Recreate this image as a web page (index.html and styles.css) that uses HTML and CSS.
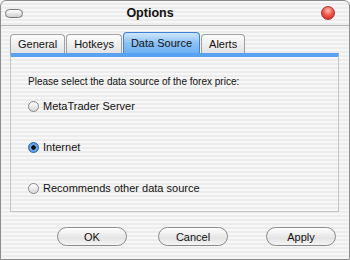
FILE: index.html
```html
<!DOCTYPE html>
<html lang="en">

<head>
    <meta charset="UTF-8">
    <title>Options</title>
    <link rel="stylesheet" href="styles.css">
</head>

<body>
    <div class="window">
        <div class="titlebar">
            <span class="pill"></span>
            <span class="title">Options</span>
            <span class="close"></span>
        </div>

        <div class="tabs">
            <div class="tab">General</div>
            <div class="tab">Hotkeys</div>
            <div class="tab active">Data Source</div>
            <div class="tab">Alerts</div>
        </div>

        <div class="panel">
            <div class="prompt">Please select the data source of the forex price:</div>
            <label class="radio"><span class="dot"></span>MetaTrader Server</label>
            <label class="radio"><span class="dot checked"></span>Internet</label>
            <label class="radio"><span class="dot"></span>Recommends other data source</label>
        </div>

        <div class="buttons">
            <button class="button">OK</button>
            <button class="button">Cancel</button>
            <button class="button">Apply</button>
        </div>
    </div>
</body>

</html>
```

FILE: styles.css
```css
body {
    margin: 0;
    font-family: "Liberation Sans", Arial, sans-serif;
    color: #111;
}

.window {
    width: 350px;
    height: 260px;
    box-sizing: border-box;
    border: 1px solid #8c8c8c;
    border-radius: 6px 6px 0 0;
    background: repeating-linear-gradient(#f7f7f7 0, #f7f7f7 2px, #ececec 2px, #ececec 4px);
    overflow: hidden;
}

.titlebar {
    height: 24px;
    display: flex;
    align-items: center;
    padding: 0 14px 0 4px;
    border-bottom: 1px solid #b4b4b4;
}

.pill {
    width: 16px;
    height: 7px;
    border: 1px solid #777;
    border-radius: 5px;
    background: linear-gradient(#fff, #d0d0d0);
}

.title {
    flex: 1;
    text-align: center;
    font-weight: bold;
    font-size: 12.5px;
    padding-right: 44px;
}

.close {
    width: 12px;
    height: 12px;
    border-radius: 50%;
    border: 1px solid #a33;
    background: radial-gradient(circle at 50% 30%, #ffc0b8 0, #f25a4e 45%, #c8201a 100%);
}

.tabs {
    display: flex;
    align-items: flex-end;
    margin-top: 7px;
    padding-left: 9px;
    height: 20px;
}

.tab {
    height: 18px;
    line-height: 19px;
    padding: 0 7px;
    font-size: 11px;
    border: 1px solid #a0a0a0;
    border-bottom: none;
    border-radius: 4px 4px 0 0;
    background: linear-gradient(#fdfdfd, #e2e2e2);
    margin-right: 1px;
}

.tab.active {
    height: 20px;
    line-height: 20px;
    padding: 0 7px;
    border-color: #3f7fd6;
    background: linear-gradient(#cfe6fd, #8cc2f6 50%, #6eb0f3);
}

.panel {
    box-sizing: border-box;
    margin: 0 10px 0 9px;
    height: 159px;
    border: 1px solid #c4c4c4;
    border-top: 4px solid #5aa2f1;
    padding: 19px 0 0 17px;
}

.prompt {
    font-size: 10px;
    margin-bottom: 12px;
}

.radio {
    display: flex;
    align-items: center;
    font-size: 11px;
    height: 14px;
    margin-bottom: 27px;
}

.dot {
    width: 9px;
    height: 9px;
    border-radius: 50%;
    border: 1px solid #888;
    background: linear-gradient(#fff, #d8d8d8);
    margin-right: 4px;
}

.dot.checked {
    border-color: #2a5fa8;
    background: radial-gradient(circle, #111 0, #111 2px, #6fb1f4 2.5px, #3f86e0 100%);
}

.buttons {
    display: flex;
    margin-top: 15px;
    padding-left: 56px;
}

.button {
    width: 70px;
    height: 19px;
    border: 1px solid #8a8a8a;
    border-radius: 10px;
    background: linear-gradient(#ffffff, #e4e4e4 60%, #f4f4f4);
    font-family: "Liberation Sans", Arial, sans-serif;
    font-size: 11px;
    color: #111;
    padding: 0;
}

.button + .button {
    margin-left: 31px;
}

.button:last-child {
    margin-left: 38px;
}
```
